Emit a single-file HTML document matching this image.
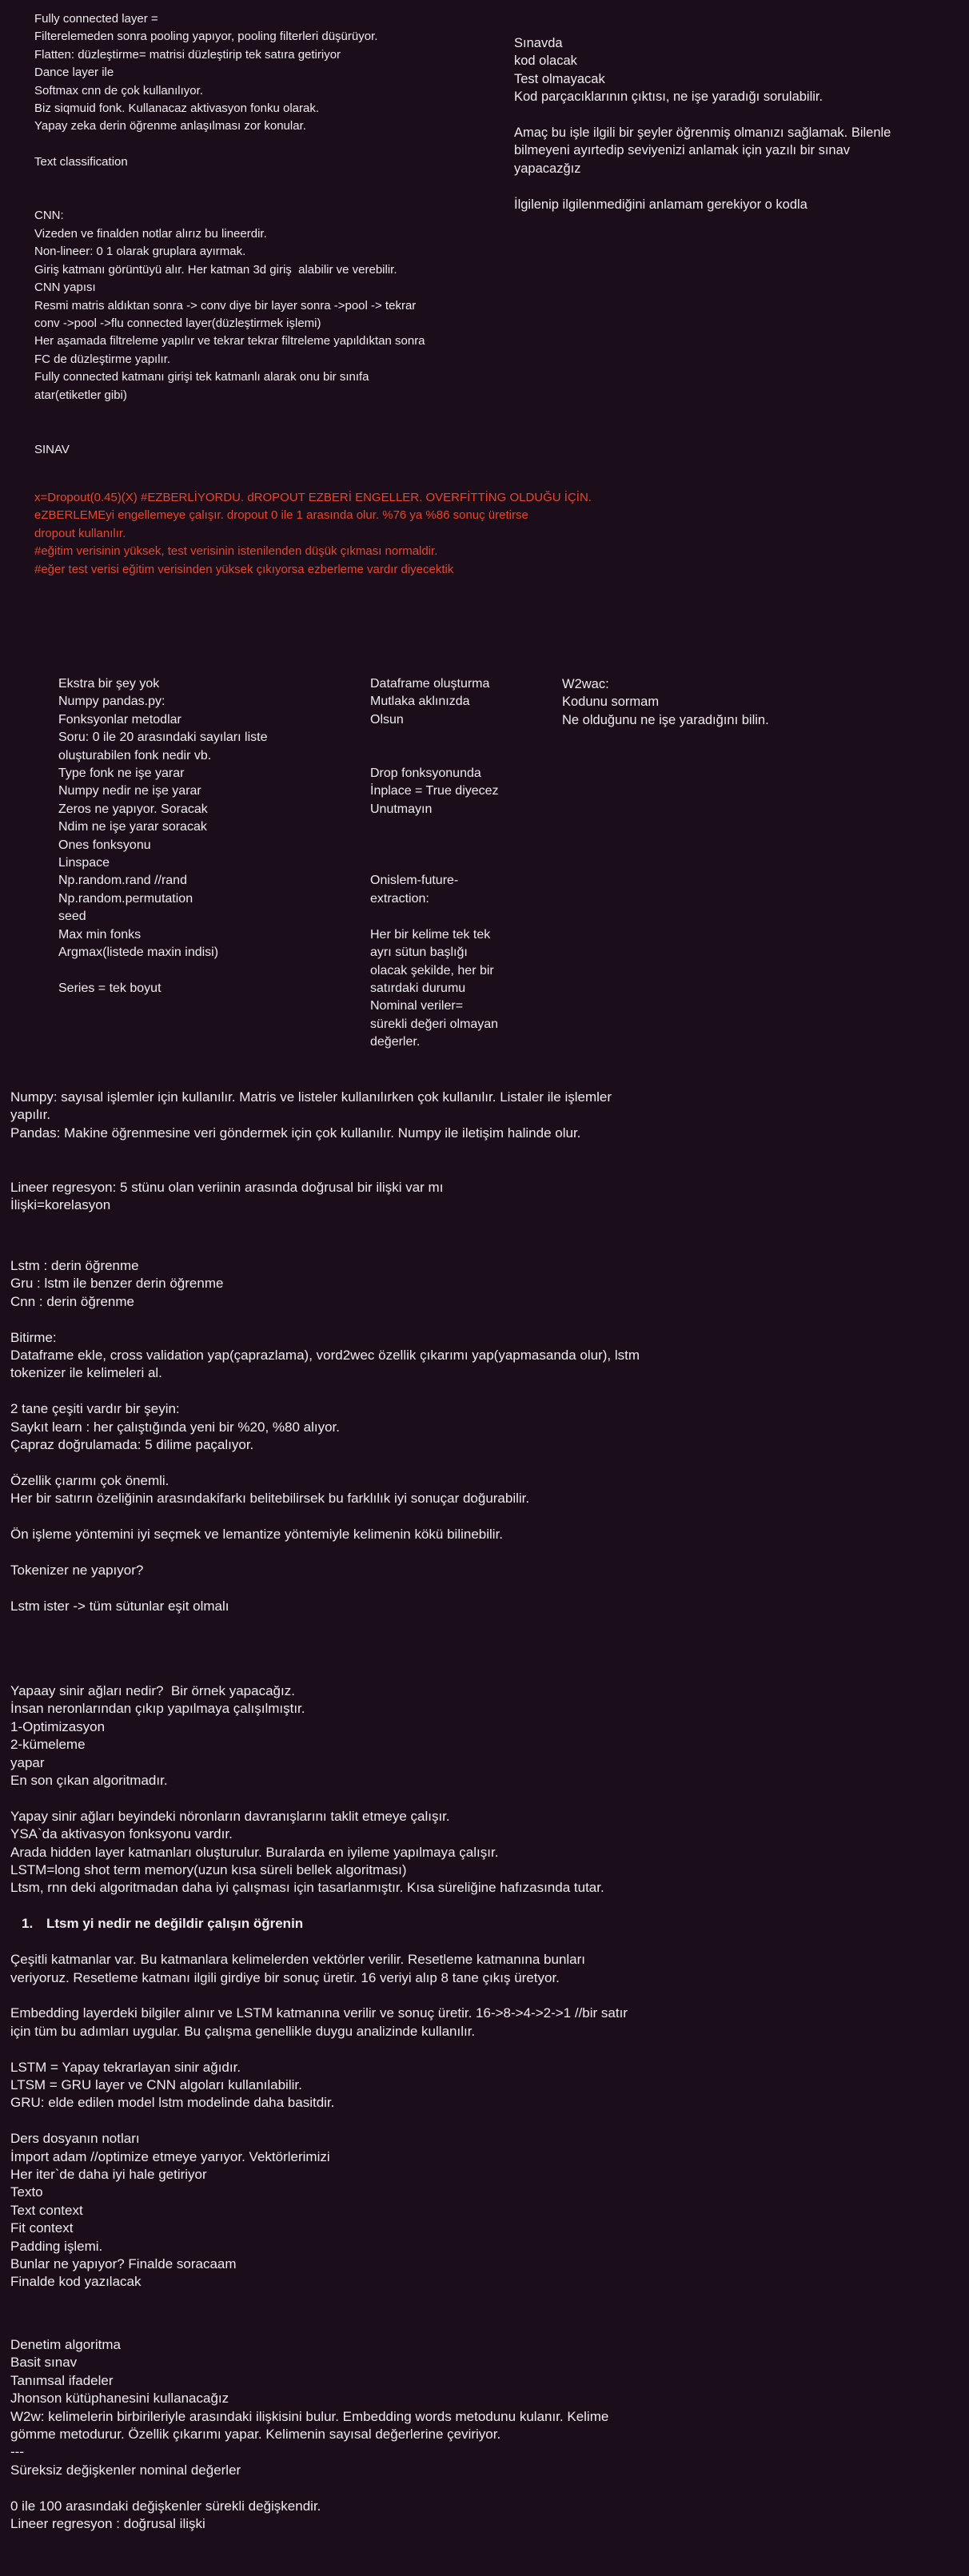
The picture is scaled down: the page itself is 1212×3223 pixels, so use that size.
<!DOCTYPE html>
<html><head><meta charset="utf-8">
<style>
html,body{margin:0;padding:0;}
body{width:1212px;height:3223px;background:#1c0d1a;position:relative;overflow:hidden;
font-family:"Liberation Sans",sans-serif;font-size:15px;line-height:22.4px;color:#ececec;}
.b{position:absolute;white-space:nowrap;}
.r{color:#e8452a;}
.m{font-size:16.5px;}
.l{font-size:17px;}
</style></head><body>

<div class="b" style="left:43px;top:13px">Fully connected layer =<br>Filterelemeden sonra pooling yapıyor, pooling filterleri düşürüyor.<br>Flatten: düzleştirme= matrisi düzleştirip tek satıra getiriyor<br>Dance layer ile<br>Softmax cnn de çok kullanılıyor.<br>Biz siqmuid fonk. Kullanacaz aktivasyon fonku olarak.<br>Yapay zeka derin öğrenme anlaşılması zor konular.<br><br>Text classification<br><br><br>CNN:<br>Vizeden ve finalden notlar alırız bu lineerdir.<br>Non-lineer: 0 1 olarak gruplara ayırmak.<br>Giriş katmanı görüntüyü alır. Her katman 3d giriş&nbsp; alabilir ve verebilir.<br>CNN yapısı<br>Resmi matris aldıktan sonra -&gt; conv diye bir layer sonra -&gt;pool -&gt; tekrar<br>conv -&gt;pool -&gt;flu connected layer(düzleştirmek işlemi)<br>Her aşamada filtreleme yapılır ve tekrar tekrar filtreleme yapıldıktan sonra<br>FC de düzleştirme yapılır.<br>Fully connected katmanı girişi tek katmanlı alarak onu bir sınıfa<br>atar(etiketler gibi)</div>

<div class="b" style="left:43px;top:552px">SINAV</div>

<div class="b r" style="left:43px;top:612px">x=Dropout(0.45)(X) #EZBERLİYORDU. dROPOUT EZBERİ ENGELLER. OVERFİTTİNG OLDUĞU İÇİN.<br>eZBERLEMEyi engellemeye çalışır. dropout 0 ile 1 arasında olur. %76 ya %86 sonuç üretirse<br>dropout kullanılır.<br>#eğitim verisinin yüksek, test verisinin istenilenden düşük çıkması normaldir.<br>#eğer test verisi eğitim verisinden yüksek çıkıyorsa ezberleme vardır diyecektik</div>

<div class="b m" style="left:643px;top:43px">Sınavda<br>kod olacak<br>Test olmayacak<br>Kod parçacıklarının çıktısı, ne işe yaradığı sorulabilir.<br><br>Amaç bu işle ilgili bir şeyler öğrenmiş olmanızı sağlamak. Bilenle<br>bilmeyeni ayırtedip seviyenizi anlamak için yazılı bir sınav<br>yapacazğız<br><br>İlgilenip ilgilenmediğini anlamam gerekiyor o kodla</div>

<div class="b" style="left:73px;top:845px;font-size:16px">Ekstra bir şey yok<br>Numpy pandas.py:<br>Fonksyonlar metodlar<br>Soru: 0 ile 20 arasındaki sayıları liste<br>oluşturabilen fonk nedir vb.<br>Type fonk ne işe yarar<br>Numpy nedir ne işe yarar<br>Zeros ne yapıyor. Soracak<br>Ndim ne işe yarar soracak<br>Ones fonksyonu<br>Linspace<br>Np.random.rand //rand<br>Np.random.permutation<br>seed<br>Max min fonks<br>Argmax(listede maxin indisi)<br><br>Series = tek boyut</div>

<div class="b" style="left:463px;top:845px;font-size:16px">Dataframe oluşturma<br>Mutlaka aklınızda<br>Olsun<br><br><br>Drop fonksyonunda<br>İnplace = True diyecez<br>Unutmayın<br><br><br><br>Onislem-future-<br>extraction:<br><br>Her bir kelime tek tek<br>ayrı sütun başlığı<br>olacak şekilde, her bir<br>satırdaki durumu<br>Nominal veriler=<br>sürekli değeri olmayan<br>değerler.</div>

<div class="b m" style="left:703px;top:845px">W2wac:<br>Kodunu sormam<br>Ne olduğunu ne işe yaradığını bilin.</div>

<div class="b l" style="left:13px;top:1362px">Numpy: sayısal işlemler için kullanılır. Matris ve listeler kullanılırken çok kullanılır. Listaler ile işlemler<br>yapılır.<br>Pandas: Makine öğrenmesine veri göndermek için çok kullanılır. Numpy ile iletişim halinde olur.</div>

<div class="b l" style="left:13px;top:1475px">Lineer regresyon: 5 stünu olan veriinin arasında doğrusal bir ilişki var mı<br>İlişki=korelasyon</div>

<div class="b l" style="left:13px;top:1573px">Lstm : derin öğrenme<br>Gru : lstm ile benzer derin öğrenme<br>Cnn : derin öğrenme<br><br>Bitirme:<br>Dataframe ekle, cross validation yap(çaprazlama), vord2wec özellik çıkarımı yap(yapmasanda olur), lstm<br>tokenizer ile kelimeleri al.<br><br>2 tane çeşiti vardır bir şeyin:<br>Saykıt learn : her çalıştığında yeni bir %20, %80 alıyor.<br>Çapraz doğrulamada: 5 dilime paçalıyor.<br><br>Özellik çıarımı çok önemli.<br>Her bir satırın özeliğinin arasındakifarkı belitebilirsek bu farklılık iyi sonuçar doğurabilir.<br><br>Ön işleme yöntemini iyi seçmek ve lemantize yöntemiyle kelimenin kökü bilinebilir.<br><br>Tokenizer ne yapıyor?<br><br>Lstm ister -&gt; tüm sütunlar eşit olmalı</div>

<div class="b l" style="left:13px;top:2105px">Yapaay sinir ağları nedir?&nbsp; Bir örnek yapacağız.<br>İnsan neronlarından çıkıp yapılmaya çalışılmıştır.<br>1-Optimizasyon<br>2-kümeleme<br>yapar<br>En son çıkan algoritmadır.<br><br>Yapay sinir ağları beyindeki nöronların davranışlarını taklit etmeye çalışır.<br>YSA`da aktivasyon fonksyonu vardır.<br>Arada hidden layer katmanları oluşturulur. Buralarda en iyileme yapılmaya çalışır.<br>LSTM=long shot term memory(uzun kısa süreli bellek algoritması)<br>Ltsm, rnn deki algoritmadan daha iyi çalışması için tasarlanmıştır. Kısa süreliğine hafızasında tutar.<br><br><b style="position:relative;left:14px"><span style="display:inline-block;width:31px">1.</span>Ltsm yi nedir ne değildir çalışın öğrenin</b><br><br>Çeşitli katmanlar var. Bu katmanlara kelimelerden vektörler verilir. Resetleme katmanına bunları<br>veriyoruz. Resetleme katmanı ilgili girdiye bir sonuç üretir. 16 veriyi alıp 8 tane çıkış üretyor.<br><br>Embedding layerdeki bilgiler alınır ve LSTM katmanına verilir ve sonuç üretir. 16-&gt;8-&gt;4-&gt;2-&gt;1 //bir satır<br>için tüm bu adımları uygular. Bu çalışma genellikle duygu analizinde kullanılır.<br><br>LSTM = Yapay tekrarlayan sinir ağıdır.<br>LTSM = GRU layer ve CNN algoları kullanılabilir.<br>GRU: elde edilen model lstm modelinde daha basitdir.<br><br>Ders dosyanın notları<br>İmport adam //optimize etmeye yarıyor. Vektörlerimizi<br>Her iter`de daha iyi hale getiriyor<br>Texto<br>Text context<br>Fit context<br>Padding işlemi.<br>Bunlar ne yapıyor? Finalde soracaam<br>Finalde kod yazılacak</div>

<div class="b l" style="left:13px;top:2923px">Denetim algoritma<br>Basit sınav<br>Tanımsal ifadeler<br>Jhonson kütüphanesini kullanacağız<br>W2w: kelimelerin birbirileriyle arasındaki ilişkisini bulur. Embedding words metodunu kulanır. Kelime<br>gömme metodurur. Özellik çıkarımı yapar. Kelimenin sayısal değerlerine çeviriyor.<br>---<br>Süreksiz değişkenler nominal değerler<br><br>0 ile 100 arasındaki değişkenler sürekli değişkendir.<br>Lineer regresyon : doğrusal ilişki</div>

</body></html>
